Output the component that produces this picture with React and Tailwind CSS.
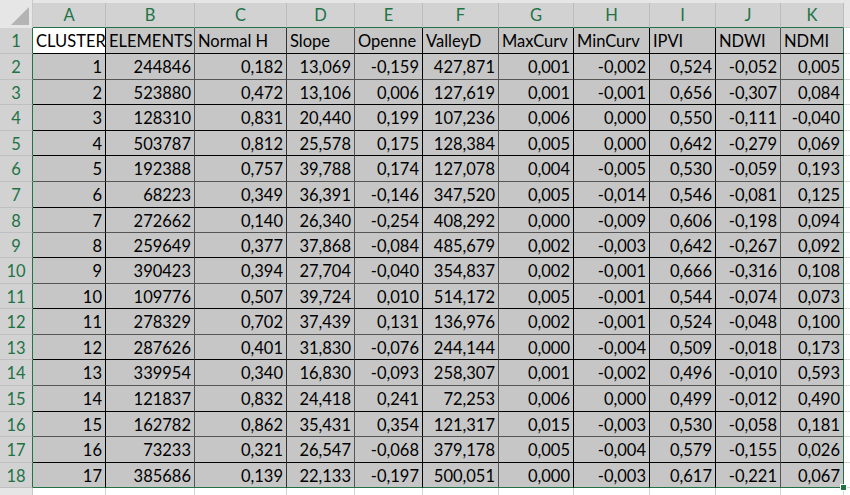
const columns = [
  { letter: "A", w: "w-[73px]", line: "border-r-black" },
  { letter: "B", w: "w-[89px]", line: "border-r-[#555]" },
  { letter: "C", w: "w-[92px]", line: "border-r-[#333]" },
  { letter: "D", w: "w-[68px]", line: "border-r-[#555]" },
  { letter: "E", w: "w-[68px]", line: "border-r-black" },
  { letter: "F", w: "w-[76px]", line: "border-r-[#555]" },
  { letter: "G", w: "w-[75px]", line: "border-r-black" },
  { letter: "H", w: "w-[76px]", line: "border-r-black" },
  { letter: "I", w: "w-[66px]", line: "border-r-black" },
  { letter: "J", w: "w-[65px]", line: "border-r-[#555]" },
  { letter: "K", w: "w-[63px]", line: "border-r-[#217346]" },
];

const titles = ["CLUSTER", "ELEMENTS", "Normal H", "Slope", "Openne", "ValleyD", "MaxCurv", "MinCurv", "IPVI", "NDWI", "NDMI"];

const rows = [
  ["1", "244846", "0,182", "13,069", "-0,159", "427,871", "0,001", "-0,002", "0,524", "-0,052", "0,005"],
  ["2", "523880", "0,472", "13,106", "0,006", "127,619", "0,001", "-0,001", "0,656", "-0,307", "0,084"],
  ["3", "128310", "0,831", "20,440", "0,199", "107,236", "0,006", "0,000", "0,550", "-0,111", "-0,040"],
  ["4", "503787", "0,812", "25,578", "0,175", "128,384", "0,005", "0,000", "0,642", "-0,279", "0,069"],
  ["5", "192388", "0,757", "39,788", "0,174", "127,078", "0,004", "-0,005", "0,530", "-0,059", "0,193"],
  ["6", "68223", "0,349", "36,391", "-0,146", "347,520", "0,005", "-0,014", "0,546", "-0,081", "0,125"],
  ["7", "272662", "0,140", "26,340", "-0,254", "408,292", "0,000", "-0,009", "0,606", "-0,198", "0,094"],
  ["8", "259649", "0,377", "37,868", "-0,084", "485,679", "0,002", "-0,003", "0,642", "-0,267", "0,092"],
  ["9", "390423", "0,394", "27,704", "-0,040", "354,837", "0,002", "-0,001", "0,666", "-0,316", "0,108"],
  ["10", "109776", "0,507", "39,724", "0,010", "514,172", "0,005", "-0,001", "0,544", "-0,074", "0,073"],
  ["11", "278329", "0,702", "37,439", "0,131", "136,976", "0,002", "-0,001", "0,524", "-0,048", "0,100"],
  ["12", "287626", "0,401", "31,830", "-0,076", "244,144", "0,000", "-0,004", "0,509", "-0,018", "0,173"],
  ["13", "339954", "0,340", "16,830", "-0,093", "258,307", "0,001", "-0,002", "0,496", "-0,010", "0,593"],
  ["14", "121837", "0,832", "24,418", "0,241", "72,253", "0,006", "0,000", "0,499", "-0,012", "0,490"],
  ["15", "162782", "0,862", "35,431", "0,354", "121,317", "0,015", "-0,003", "0,530", "-0,058", "0,181"],
  ["16", "73233", "0,321", "26,547", "-0,068", "379,178", "0,005", "-0,004", "0,579", "-0,155", "0,026"],
  ["17", "385686", "0,139", "22,133", "-0,197", "500,051", "0,000", "-0,003", "0,617", "-0,221", "0,067"],
];

// row heights include the bottom line, picked to land on the screenshot's lines
const heights = ["h-[26px]", "h-[26px]", "h-[25px]", "h-[26px]", "h-[25px]", "h-[26px]", "h-[26px]", "h-[25px]", "h-[25px]", "h-[26px]", "h-[25px]", "h-[26px]", "h-[25px]", "h-[26px]", "h-[26px]", "h-[25px]", "h-[26px]", "h-[25px]"];
const hlines = ["border-b-black", "border-b-[#555]", "border-b-black", "border-b-black", "border-b-black", "border-b-[#555]", "border-b-black", "border-b-[#555]", "border-b-black", "border-b-[#555]", "border-b-black", "border-b-[#555]", "border-b-black", "border-b-[#555]", "border-b-black", "border-b-[#555]", "border-b-black", "border-b-[#217346]"];

function Cell({ col, row, children, right, white }) {
  return (
    <div
      className={`${col.w} ${hlines[row]} ${col.line} shrink-0 border-r border-b flex items-center overflow-hidden whitespace-nowrap px-[3px] pt-[2px] ${right ? "justify-end" : "justify-start"} ${white ? "bg-white" : "bg-[#c6c6c6]"}`}
    >
      {children}
    </div>
  );
}

function RowHead({ n }) {
  return (
    <div className="w-[33px] shrink-0 bg-[#d2d2d2] border-r border-r-[#217346] border-b border-b-[#bfbfbf] flex items-center justify-center pt-[2px] text-[#217346]">
      {n}
    </div>
  );
}

export default function App() {
  return (
    <div className="w-[850px] h-[495px] overflow-hidden bg-white font-['Lato',sans-serif] text-[16.5px] text-black relative">
      {/* column headers */}
      <div className="flex h-[28px] bg-[#e6e6e6]">
        <div className="w-[33px] shrink-0 border-r border-[#c8c8c8] relative">
          <svg className="absolute right-[3px] bottom-[3px]" width="18" height="18" viewBox="0 0 18 18">
            <polygon points="18,0 18,18 0,18" fill="#b4b4b4" />
          </svg>
        </div>
        {columns.map((c) => (
          <div
            key={c.letter}
            className={`${c.w} shrink-0 mt-[3px] bg-[#d2d2d2] border-r border-[#bcbcbc] border-b border-b-[#217346] flex items-center justify-center text-[#217346]`}
          >
            {c.letter}
          </div>
        ))}
        <div className="flex-1 mt-[3px] border-b border-[#d4d4d4]" />
      </div>

      {/* row 1: titles */}
      <div className={`flex ${heights[0]}`}>
        <RowHead n={1} />
        {columns.map((c, j) => (
          <Cell key={c.letter} col={c} row={0} white={j === 0}>
            {titles[j]}
          </Cell>
        ))}
        <div className="flex-1 border-b border-[#d4d4d4]" />
      </div>

      {rows.map((r, i) => (
        <div key={i} className={`flex ${heights[i + 1]}`}>
          <RowHead n={i + 2} />
          {columns.map((c, j) => (
            <Cell key={c.letter} col={c} row={i + 1} right>
              {r[j]}
            </Cell>
          ))}
          <div className="flex-1 border-b border-[#d4d4d4]" />
        </div>
      ))}

      {/* empty row below the data */}
      <div className="flex h-[26px]">
        <div className="w-[33px] shrink-0 bg-[#e6e6e6] border-r border-[#c8c8c8]" />
        {columns.map((c) => (
          <div key={c.letter} className={`${c.w} shrink-0 border-r border-[#d4d4d4]`} />
        ))}
      </div>

      {/* fill handle */}
      <div className="absolute left-[840px] top-[484px] w-[7px] h-[7px] bg-[#217346] border border-white" />
    </div>
  );
}
